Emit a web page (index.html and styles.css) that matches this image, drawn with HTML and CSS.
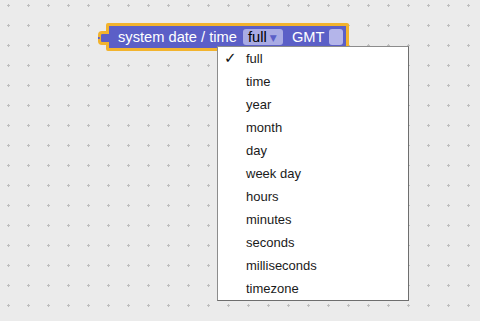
FILE: index.html
```html
<!DOCTYPE html>
<html>
<head>
<meta charset="utf-8">
<link rel="stylesheet" href="styles.css">
</head>
<body>
<div class="workspace">
  <svg class="grid" width="480" height="321" xmlns="http://www.w3.org/2000/svg">
    <defs>
      <pattern id="dots" x="0" y="0" width="20" height="20" patternUnits="userSpaceOnUse">
        <rect x="7" y="5" width="3" height="1" fill="#bdbdbd"/>
        <rect x="8" y="4" width="1" height="3" fill="#bdbdbd"/>
      </pattern>
    </defs>
    <rect width="480" height="321" fill="url(#dots)"/>
  </svg>

  <div class="block">
    <span class="tab"></span>
    <span class="label">system date / time</span>
    <span class="field">full<span class="arrow">▼</span></span>
    <span class="label gmt">GMT</span>
    <span class="check"></span>
  </div>

  <ul class="menu">
    <li class="item"><span class="tick">✓</span>full</li>
    <li class="item">time</li>
    <li class="item">year</li>
    <li class="item">month</li>
    <li class="item">day</li>
    <li class="item">week day</li>
    <li class="item">hours</li>
    <li class="item">minutes</li>
    <li class="item">seconds</li>
    <li class="item">milliseconds</li>
    <li class="item">timezone</li>
  </ul>
</div>
</body>
</html>
```

FILE: styles.css
```css
html, body {
  margin: 0;
  padding: 0;
}
body {
  background: #ebebeb;
  font-family: "Liberation Sans", Arial, sans-serif;
  width: 480px;
  height: 321px;
  overflow: hidden;
}
.workspace {
  position: relative;
  width: 480px;
  height: 321px;
}
.grid {
  position: absolute;
  left: 0;
  top: 0;
}
.block {
  position: absolute;
  left: 106px;
  top: 23px;
  box-sizing: border-box;
  width: 243px;
  height: 28px;
  display: flex;
  align-items: center;
  padding-left: 9px;
  background: #5b5fc7;
  border: 3px solid #f2b32d;
  border-radius: 2px;
  color: #fff;
}
.tab {
  position: absolute;
  left: -11px;
  top: 5px;
  width: 11px;
  height: 14px;
  box-sizing: border-box;
  background: #5b5fc7;
  border: 3px solid #f2b32d;
  border-right: none;
  border-radius: 4px 0 0 4px;
}
.tab::after {
  content: "";
  position: absolute;
  left: -3px;
  top: 3px;
  width: 2px;
  height: 2px;
  background: #5b5fc7;
  border-radius: 0 2px 2px 0;
}
.label {
  font-size: 14.67px;
  line-height: 16px;
  white-space: nowrap;
}
.field {
  margin-left: 6px;
  height: 16px;
  width: 40px;
  box-sizing: border-box;
  padding-left: 5px;
  display: flex;
  align-items: center;
  background: #a9abe4;
  border-radius: 3px;
  color: #000;
  font-size: 14.67px;
  line-height: 16px;
  white-space: nowrap;
}
.arrow {
  margin-left: 3px;
  color: #5b5fc7;
  font-size: 9px;
  line-height: 16px;
  padding-top: 2px;
  font-family: "DejaVu Sans", sans-serif;
}
.gmt {
  margin-left: 9px;
}
.check {
  margin-left: 5px;
  width: 14px;
  height: 16px;
  background: #b4b5ea;
  border-radius: 3px;
}
.menu {
  position: absolute;
  left: 217px;
  top: 46px;
  width: 190px;
  margin: 0;
  padding: 0;
  list-style: none;
  background: #fff;
  border: 1px solid #8c8c8c;
  border-right-color: #6e6e6e;
  border-bottom-color: #6e6e6e;
}
.item {
  position: relative;
  height: 23px;
  line-height: 23px;
  padding-left: 28px;
  font-size: 13px;
  color: #1a1a1a;
}
.tick {
  position: absolute;
  left: 6px;
  top: 0;
  font-family: "DejaVu Sans", sans-serif;
  font-size: 15px;
  color: #111;
}
```
